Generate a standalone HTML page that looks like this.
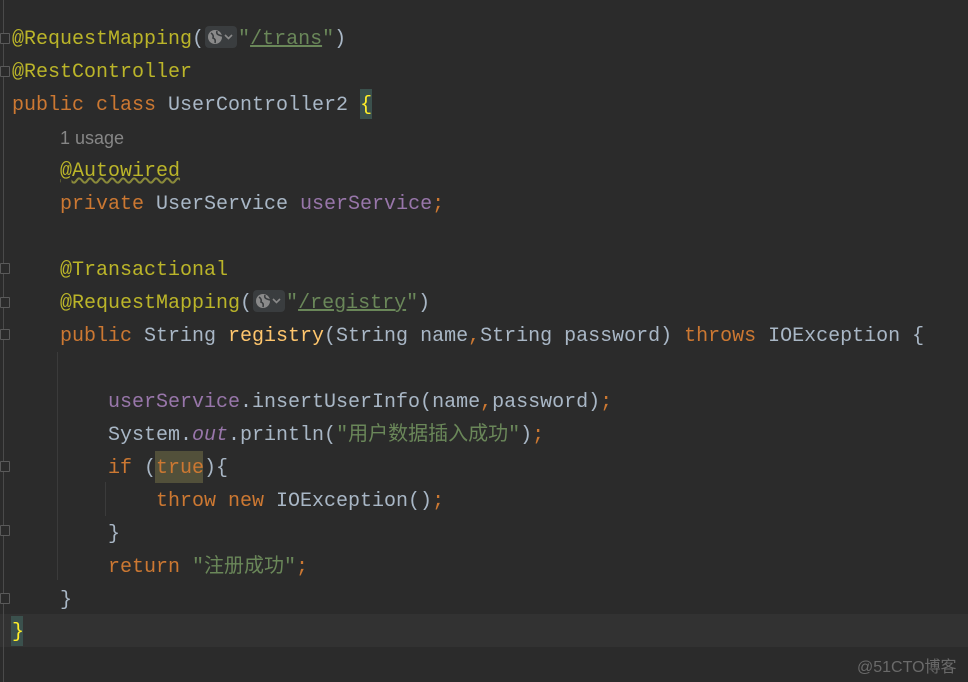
<!DOCTYPE html>
<html><head><meta charset="utf-8"><style>
html,body{margin:0;padding:0;background:#2b2b2b;width:968px;height:682px;overflow:hidden;position:relative}
.l{position:absolute;left:12px;height:33px;line-height:33px;font-family:"Liberation Mono","Noto Sans CJK SC",monospace;font-size:20px;color:#a9b7c6;white-space:pre}
.a{color:#bbb529}.k{color:#cc7832}.p{color:#9876aa}.s{color:#6a8759}.m{color:#ffc66d}.i{font-style:italic;color:#9876aa}
.u{text-decoration:underline;text-decoration-color:#6a8759}
.g{display:inline-block;width:32px;height:22px;background:#3a3d3f;border-radius:4px;vertical-align:-4px;margin:0 1px;position:relative}
.g svg{position:absolute;left:2px;top:3px}
.cur{position:absolute;left:0;top:614px;width:968px;height:33px;background:#323232}
.fold{position:absolute;left:0;width:8px;height:9px;border:1.5px solid #5a5a5a;border-radius:1px;background:#2b2b2b}
</style></head><body>
<div class="cur"></div>
<div style="position:absolute;left:3px;top:0;width:1px;height:682px;background:#4a4a4a"></div>
<div style="position:absolute;left:57px;top:352px;width:1px;height:228px;background:#3b3b3b"></div>
<div style="position:absolute;left:105px;top:482px;width:1px;height:34px;background:#3b3b3b"></div>
<div class="fold" style="top:33px"></div><div class="fold" style="top:66px"></div>
<div class="fold" style="top:263px"></div><div class="fold" style="top:297px"></div><div class="fold" style="top:329px"></div>
<div class="fold" style="top:461px"></div><div class="fold" style="top:525px"></div><div class="fold" style="top:593px"></div>
<div style="position:absolute;left:360px;top:89px;width:12px;height:30px;background:#3b514d"></div>
<div style="position:absolute;left:155px;top:451px;width:48px;height:32px;background:#52503a"></div>
<div style="position:absolute;left:11px;top:616px;width:12px;height:30px;background:#3b514d"></div>
<div class="l" style="top:23px"><span class="a">@RequestMapping</span>(<span class="g"><svg width="28" height="16"><circle cx="8" cy="8" r="7" fill="#8a8a8a"/><path d="M4 4 q3 2 2 5 q3 1 2 5 M10 2 q-1 3 2 4 l3 1" stroke="#3a3d3f" stroke-width="1.6" fill="none"/><path d="M18 6 l3.5 3.5 l3.5-3.5" stroke="#8a8a8a" stroke-width="1.6" fill="none"/></svg></span><span class="s">"<span class="u">/trans</span>"</span>)</div>
<div class="l" style="top:56px"><span class="a">@RestController</span></div>
<div class="l" style="top:89px"><span class="k">public class </span>UserController2 <span style="color:#ffef28">{</span></div>
<div class="l" style="top:122px;left:60px;font-family:'Liberation Sans',sans-serif;font-size:18px;color:#868686">1 usage</div>
<div class="l" style="top:155px;left:60px"><span class="a" style="text-decoration:underline wavy #8a8a3a">@Autowired</span></div>
<div class="l" style="top:188px;left:60px"><span class="k">private </span>UserService <span class="p">userService</span><span class="k">;</span></div>
<div class="l" style="top:254px;left:60px"><span class="a">@Transactional</span></div>
<div class="l" style="top:287px;left:60px"><span class="a">@RequestMapping</span>(<span class="g"><svg width="28" height="16"><circle cx="8" cy="8" r="7" fill="#8a8a8a"/><path d="M4 4 q3 2 2 5 q3 1 2 5 M10 2 q-1 3 2 4 l3 1" stroke="#3a3d3f" stroke-width="1.6" fill="none"/><path d="M18 6 l3.5 3.5 l3.5-3.5" stroke="#8a8a8a" stroke-width="1.6" fill="none"/></svg></span><span class="s">"<span class="u">/registry</span>"</span>)</div>
<div class="l" style="top:320px;left:60px"><span class="k">public </span>String <span class="m">registry</span>(String name<span class="k">,</span>String password) <span class="k">throws </span>IOException {</div>
<div class="l" style="top:386px;left:108px"><span class="p">userService</span>.insertUserInfo(name<span class="k">,</span>password)<span class="k">;</span></div>
<div class="l" style="top:419px;left:108px">System.<span class="i">out</span>.println(<span class="s">"用户数据插入成功"</span>)<span class="k">;</span></div>
<div class="l" style="top:452px;left:108px"><span class="k">if </span>(<span class="k">true</span>){</div>
<div class="l" style="top:485px;left:156px"><span class="k">throw new </span>IOException()<span class="k">;</span></div>
<div class="l" style="top:518px;left:108px">}</div>
<div class="l" style="top:551px;left:108px"><span class="k">return </span><span class="s">"注册成功"</span><span class="k">;</span></div>
<div class="l" style="top:584px;left:60px">}</div>
<div class="l" style="top:616px"><span style="color:#ffef28">}</span></div>
<div style="position:absolute;left:857px;top:653px;font-family:'Liberation Sans','Noto Sans CJK SC',sans-serif;font-size:16px;color:#6a6a6a">@51CTO博客</div>
</body></html>
